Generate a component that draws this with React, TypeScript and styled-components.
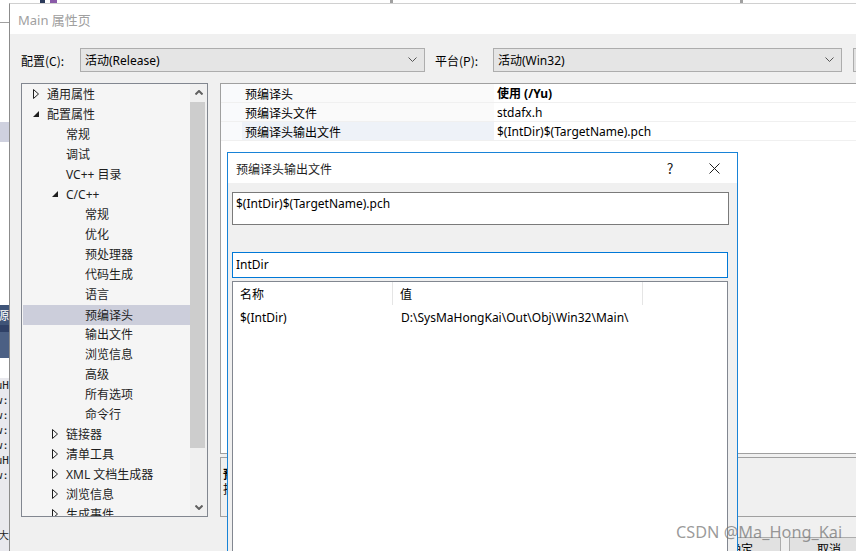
import React from 'react';
import styled, { createGlobalStyle } from 'styled-components';

const GlobalStyle = createGlobalStyle`
  html, body {
    margin: 0;
    padding: 0;
  }
  body {
    font-family: "Noto Sans", "Noto Sans CJK SC", sans-serif;
    font-size: 12px;
    color: #000;
    background: #f0f0f0;
  }
  * {
    box-sizing: border-box;
  }
`;

const Page = styled.div`
  position: relative;
  width: 856px;
  height: 551px;
  overflow: hidden;
  display: flex;
`;

/* background window peeking out on the left */
const LeftStrip = styled.div`
  width: 9px;
  flex-shrink: 0;
  display: flex;
  flex-direction: column;
  overflow: hidden;
`;

const StripBlock = styled.div<{ $h: number; $bg: string; $line?: boolean }>`
  height: ${(p) => p.$h}px;
  flex-shrink: 0;
  background: ${(p) => p.$bg};
  border-bottom: ${(p) => (p.$line ? '1px solid #a0a0a0' : 'none')};
  display: flex;
  justify-content: flex-end;
  align-items: center;
  overflow: hidden;
  color: #fff;
  font-size: 12px;
  white-space: nowrap;
`;

const CodePane = styled.div`
  flex: 1;
  background: #e9e9ee;
  display: flex;
  flex-direction: column;
  align-items: flex-end;
  overflow: hidden;
`;

const CodeLine = styled.div<{ $gap?: number }>`
  height: 15px;
  line-height: 15px;
  margin-top: ${(p) => p.$gap || 0}px;
  font-family: "DejaVu Sans Mono", monospace;
  font-size: 11px;
  color: #222;
  white-space: nowrap;
`;

const MainColumn = styled.div`
  flex: 1;
  display: flex;
  flex-direction: column;
  min-width: 0;
`;

const TopStrip = styled.div`
  height: 3px;
  flex-shrink: 0;
  background: #fff;
  display: flex;
  align-items: stretch;
  overflow: hidden;
`;

const StripMark = styled.span<{ $w: number; $ml: number; $bg: string }>`
  width: ${(p) => p.$w}px;
  margin-left: ${(p) => p.$ml}px;
  background: ${(p) => p.$bg};
  flex-shrink: 0;
`;

const MainDialog = styled.div`
  flex: 1;
  width: 900px;
  border-left: 1px solid #8c8c8c;
  border-top: 1px solid #d0d0d0;
  display: flex;
  flex-direction: column;
  background: #f0f0f0;
`;

const TitleBar = styled.div`
  height: 30px;
  flex-shrink: 0;
  background: #fff;
  display: flex;
  align-items: center;
  padding-left: 8px;
  color: #a0a0a0;
  font-size: 13px;
`;

const Body = styled.div`
  flex: 1;
  padding: 14px 0 0 11px;
  display: flex;
  flex-direction: column;
`;

const ConfigRow = styled.div`
  display: flex;
  align-items: center;
  height: 24px;
`;

const Label = styled.div<{ $w: number; $ml?: number }>`
  width: ${(p) => p.$w}px;
  margin-left: ${(p) => p.$ml || 0}px;
  flex-shrink: 0;
  font-family: "Noto Sans CJK SC", sans-serif;
`;

const Combo = styled.div<{ $w: number }>`
  width: ${(p) => p.$w}px;
  height: 24px;
  flex-shrink: 0;
  border: 1px solid #adadad;
  background: #e5e5e5;
  display: flex;
  align-items: center;
  justify-content: space-between;
  padding: 0 7px 0 4px;
`;

const SideButton = styled.div`
  width: 80px;
  height: 24px;
  margin-left: 11px;
  flex-shrink: 0;
  border: 1px solid #adadad;
  background: #e1e1e1;
`;

const MainArea = styled.div`
  margin-top: 11px;
  display: flex;
  gap: 12px;
  align-items: flex-start;
`;

const TreePanel = styled.div`
  width: 187px;
  height: 434px;
  flex-shrink: 0;
  border: 1px solid #828790;
  background: #f5f5f5;
  display: flex;
`;

const TreeList = styled.div`
  flex: 1;
  padding: 0 0 0 1px;
  overflow: hidden;
`;

const TreeRow = styled.div<{ $level: number; $selected?: boolean }>`
  height: 20px;
  display: flex;
  align-items: center;
  padding-left: ${(p) => 10 + p.$level * 19}px;
  margin-top: ${(p) => (p.$selected ? 1 : 0)}px;
  margin-bottom: ${(p) => (p.$selected ? -1 : 0)}px;
  background: ${(p) => (p.$selected ? '#cccedb' : 'transparent')};
  font-family: "Noto Sans", "Noto Sans CJK SC", sans-serif;
  white-space: nowrap;
  color: #1e1e1e;
`;

const ArrowBox = styled.span`
  width: 14px;
  flex-shrink: 0;
  display: flex;
  align-items: center;
`;

const ScrollBar = styled.div`
  width: 17px;
  flex-shrink: 0;
  background: #f0f0f0;
  display: flex;
  flex-direction: column;
`;

const ScrollArrow = styled.div`
  height: 17px;
  display: flex;
  align-items: center;
  justify-content: center;
  flex-shrink: 0;
`;

const ScrollThumb = styled.div`
  width: 15px;
  height: 346px;
  margin-top: 1px;
  background: #cdcdcd;
`;

const ScrollSpacer = styled.div`
  flex: 1;
`;

const RightPanel = styled.div`
  width: 660px;
  flex-shrink: 0;
  display: flex;
  flex-direction: column;
`;

const PropGrid = styled.div`
  height: 371px;
  border: 1px solid #a0a0a0;
  border-right: none;
  background: #fff;
`;

const PropRow = styled.div`
  height: 19px;
  display: flex;
  border-bottom: 1px solid #f0f0f0;
`;

const Gutter = styled.div`
  width: 21px;
  flex-shrink: 0;
  background: #f9fafc;
`;

const NameCell = styled.div<{ $selected?: boolean }>`
  width: 252px;
  flex-shrink: 0;
  padding-left: 3px;
  display: flex;
  align-items: center;
  background: ${(p) => (p.$selected ? '#eef2f8' : '#fafafa')};
  font-family: "Noto Sans CJK SC", sans-serif;
`;

const ValueCell = styled.div<{ $bold?: boolean }>`
  flex: 1;
  padding-left: 3px;
  display: flex;
  align-items: center;
  font-weight: ${(p) => (p.$bold ? 700 : 400)};
`;

const DescBox = styled.div`
  margin-top: 3px;
  height: 60px;
  border: 1px solid #a0a0a0;
  border-right: none;
  background: #f0f0f0;
  padding: 8px 2px;
  font-family: "Noto Sans CJK SC", sans-serif;
  line-height: 15px;
`;

const DescTitle = styled.div`
  font-weight: 700;
`;

const ButtonRow = styled.div`
  margin-top: 20px;
  padding-left: 481px;
  display: flex;
  gap: 8px;
`;

const DlgButton = styled.div`
  width: 80px;
  height: 23px;
  border: 1px solid #adadad;
  background: #e1e1e1;
  display: flex;
  align-items: center;
  justify-content: center;
  font-family: "Noto Sans CJK SC", sans-serif;
`;

/* the child dialog on top */
const Dialog = styled.div`
  position: absolute;
  left: 227px;
  top: 152px;
  width: 511px;
  height: 420px;
  border: 1px solid #1883d7;
  background: #f0f0f0;
  display: flex;
  flex-direction: column;
`;

const DialogTitle = styled.div`
  height: 30px;
  flex-shrink: 0;
  background: #fff;
  display: flex;
  align-items: center;
  padding-left: 8px;
  font-family: "Noto Sans CJK SC", sans-serif;
  color: #1e1e1e;
`;

const DialogTitleText = styled.div`
  flex: 1;
`;

const HelpButton = styled.div`
  width: 24px;
  margin-right: 9px;
  text-align: center;
  font-size: 14px;
  color: #222;
`;

const CloseButton = styled.div`
  width: 46px;
  height: 30px;
  display: flex;
  align-items: center;
  justify-content: center;
`;

const DialogBody = styled.div`
  flex: 1;
  padding: 9px 8px 0 4px;
  display: flex;
  flex-direction: column;
`;

const EditBox = styled.div`
  height: 33px;
  border: 1px solid #7a7a7a;
  background: #fff;
  padding: 3px 3px 0;
  line-height: 16px;
`;

const InputBox = styled.div`
  margin-top: 27px;
  height: 26px;
  margin-right: 1px;
  border: 1px solid #0078d7;
  background: #fff;
  padding: 0 0 2px 3px;
  display: flex;
  align-items: center;
`;

const MacroList = styled.div`
  margin-top: 3px;
  margin-right: 1px;
  flex: 1;
  border: 1px solid #828790;
  background: #fff;
`;

const ListHeader = styled.div`
  height: 23px;
  display: flex;
  font-family: "Noto Sans CJK SC", sans-serif;
`;

const ListRow = styled.div`
  height: 20px;
  margin-top: 2px;
  display: flex;
`;

const ListCell = styled.div<{ $w: number; $sep?: boolean }>`
  width: ${(p) => p.$w}px;
  flex-shrink: 0;
  padding-left: 7px;
  display: flex;
  align-items: center;
  overflow: hidden;
  white-space: nowrap;
  border-right: ${(p) => (p.$sep ? '1px solid #e5e5e5' : 'none')};
`;

const Watermark = styled.div`
  position: absolute;
  left: 676px;
  top: 521px;
  font-family: "Noto Sans", sans-serif;
  font-size: 16.3px;
  color: rgba(110, 110, 110, 0.7);
  white-space: nowrap;
  pointer-events: none;
`;

type Item = { label: string; level: number; arrow?: 'open' | 'closed'; selected?: boolean };

const treeItems: Item[] = [
  { label: '通用属性', level: 0, arrow: 'closed' },
  { label: '配置属性', level: 0, arrow: 'open' },
  { label: '常规', level: 1 },
  { label: '调试', level: 1 },
  { label: 'VC++ 目录', level: 1 },
  { label: 'C/C++', level: 1, arrow: 'open' },
  { label: '常规', level: 2 },
  { label: '优化', level: 2 },
  { label: '预处理器', level: 2 },
  { label: '代码生成', level: 2 },
  { label: '语言', level: 2 },
  { label: '预编译头', level: 2, selected: true },
  { label: '输出文件', level: 2 },
  { label: '浏览信息', level: 2 },
  { label: '高级', level: 2 },
  { label: '所有选项', level: 2 },
  { label: '命令行', level: 2 },
  { label: '链接器', level: 1, arrow: 'closed' },
  { label: '清单工具', level: 1, arrow: 'closed' },
  { label: 'XML 文档生成器', level: 1, arrow: 'closed' },
  { label: '浏览信息', level: 1, arrow: 'closed' },
  { label: '生成事件', level: 1, arrow: 'closed' },
];

const props = [
  { name: '预编译头', value: '使用 (/Yu)', bold: true },
  { name: '预编译头文件', value: 'stdafx.h' },
  { name: '预编译头输出文件', value: '$(IntDir)$(TargetName).pch', selected: true },
];

const ClosedArrow = () => (
  <svg width="7" height="10" viewBox="0 0 7 10">
    <polygon points="0.5,0.5 5.5,5 0.5,9.5" fill="none" stroke="#1e1e1e" strokeWidth="1" />
  </svg>
);

const OpenArrow = () => (
  <svg width="7" height="7" viewBox="0 0 7 7">
    <polygon points="6,0 6,6 0,6" fill="#1e1e1e" />
  </svg>
);

const Chevron = ({ up, color = '#606060', w = 9, stroke = 1 }: { up?: boolean; color?: string; w?: number; stroke?: number }) => (
  <svg width={w} height={w / 2 + 1} viewBox={`0 0 ${w} ${w / 2 + 1}`}>
    <polyline
      points={up ? `0.5,${w / 2 + 0.5} ${w / 2},1 ${w - 0.5},${w / 2 + 0.5}` : `0.5,0.5 ${w / 2},${w / 2} ${w - 0.5},0.5`}
      fill="none"
      stroke={color}
      strokeWidth={stroke}
    />
  </svg>
);

const CloseIcon = () => (
  <svg width="11" height="11" viewBox="0 0 11 11">
    <line x1="0.5" y1="0.5" x2="10.5" y2="10.5" stroke="#1e1e1e" strokeWidth="1" />
    <line x1="10.5" y1="0.5" x2="0.5" y2="10.5" stroke="#1e1e1e" strokeWidth="1" />
  </svg>
);

export default function App() {
  return (
    <Page>
      <GlobalStyle />
      <LeftStrip>
        <StripBlock $h={23} $bg="#fff" $line />
        <StripBlock $h={99} $bg="#fff" />
        <StripBlock $h={20} $bg="#cfd1df" />
        <StripBlock $h={163} $bg="#fff" />
        <StripBlock $h={20} $bg="#3f5478">资源</StripBlock>
        <StripBlock $h={7} $bg="#2f4066" />
        <StripBlock $h={26} $bg="#4c6084" />
        <StripBlock $h={20} $bg="#fff" />
        <CodePane>
          <CodeLine>uH</CodeLine>
          <CodeLine>ow:</CodeLine>
          <CodeLine>ow:</CodeLine>
          <CodeLine>ow:</CodeLine>
          <CodeLine>ow:</CodeLine>
          <CodeLine>uH</CodeLine>
          <CodeLine>ow:</CodeLine>
          <CodeLine $gap={45}>丁大</CodeLine>
        </CodePane>
      </LeftStrip>
      <MainColumn>
        <TopStrip>
          <StripMark $w={5} $ml={31} $bg="#2b3a5a" />
          <StripMark $w={7} $ml={5} $bg="#8a5aa8" />
          <StripMark $w={3} $ml={333} $bg="#a0a0a0" />
          <StripMark $w={3} $ml={347} $bg="#a0a0a0" />
        </TopStrip>
        <MainDialog>
          <TitleBar>Main 属性页</TitleBar>
          <Body>
            <ConfigRow>
              <Label $w={59}>配置(C):</Label>
              <Combo $w={345}>
                <span>活动(Release)</span>
                <Chevron color="#555" />
              </Combo>
              <Label $w={58} $ml={10}>平台(P):</Label>
              <Combo $w={349}>
                <span>活动(Win32)</span>
                <Chevron color="#555" />
              </Combo>
              <SideButton />
            </ConfigRow>
            <MainArea>
              <TreePanel>
                <TreeList>
                  {treeItems.map((it, i) => (
                    <TreeRow key={i} $level={it.level} $selected={it.selected}>
                      <ArrowBox>
                        {it.arrow === 'closed' && <ClosedArrow />}
                        {it.arrow === 'open' && <OpenArrow />}
                      </ArrowBox>
                      {it.label}
                    </TreeRow>
                  ))}
                </TreeList>
                <ScrollBar>
                  <ScrollArrow>
                    <Chevron up w={8} stroke={2} />
                  </ScrollArrow>
                  <ScrollThumb />
                  <ScrollSpacer />
                  <ScrollArrow>
                    <Chevron w={8} stroke={2} />
                  </ScrollArrow>
                </ScrollBar>
              </TreePanel>
              <RightPanel>
                <PropGrid>
                  {props.map((p, i) => (
                    <PropRow key={i}>
                      <Gutter />
                      <NameCell $selected={p.selected}>{p.name}</NameCell>
                      <ValueCell $bold={p.bold}>{p.value}</ValueCell>
                    </PropRow>
                  ))}
                </PropGrid>
                <DescBox>
                  <DescTitle>预编译头输出文件</DescTitle>
                  <div>指定预编译头文件的路径和/或名称。(/Fp[name])</div>
                </DescBox>
                <ButtonRow>
                  <DlgButton>确定</DlgButton>
                  <DlgButton>取消</DlgButton>
                </ButtonRow>
              </RightPanel>
            </MainArea>
          </Body>
        </MainDialog>
      </MainColumn>

      <Dialog>
        <DialogTitle>
          <DialogTitleText>预编译头输出文件</DialogTitleText>
          <HelpButton>?</HelpButton>
          <CloseButton>
            <CloseIcon />
          </CloseButton>
        </DialogTitle>
        <DialogBody>
          <EditBox>$(IntDir)$(TargetName).pch</EditBox>
          <InputBox>IntDir</InputBox>
          <MacroList>
            <ListHeader>
              <ListCell $w={160} $sep>名称</ListCell>
              <ListCell $w={250} $sep>值</ListCell>
            </ListHeader>
            <ListRow>
              <ListCell $w={161}>$(IntDir)</ListCell>
              <ListCell $w={249}>D:\SysMaHongKai\Out\Obj\Win32\Main\</ListCell>
            </ListRow>
          </MacroList>
        </DialogBody>
      </Dialog>

      <Watermark>CSDN @Ma_Hong_Kai</Watermark>
    </Page>
  );
}
